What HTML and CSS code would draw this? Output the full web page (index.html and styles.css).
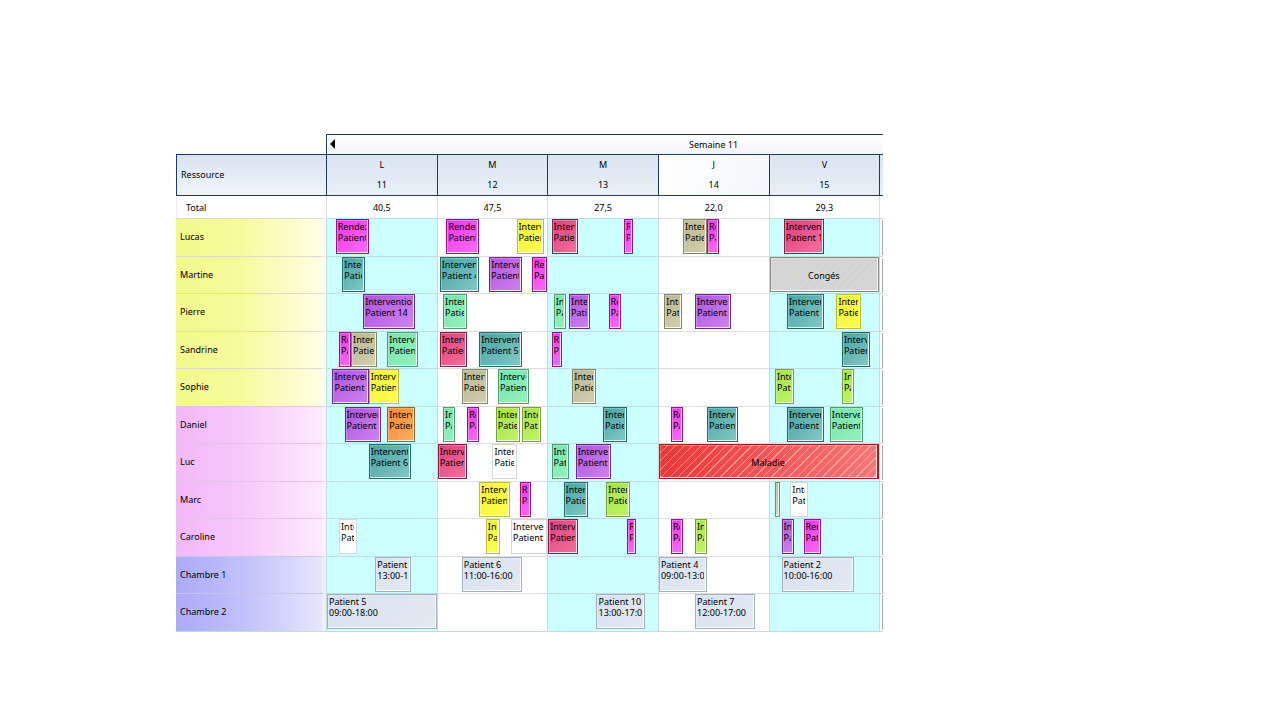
FILE: index.html
```html
<!DOCTYPE html>
<html lang="fr">
<head>
<meta charset="utf-8">
<title>Planning</title>
<link rel="stylesheet" href="styles.css">
</head>
<body>
<main class="page">
<table class="planner">
<colgroup><col class="col-name"><col><col><col><col><col><col class="col-next"></colgroup>
<thead>
<tr class="week"><td class="corner"></td><th colspan="6"><div class="week-bar"><button class="prev" type="button" aria-label="Semaine précédente"><svg width="5" height="10" viewBox="0 0 5 10"><path d="M5 0v10L0 5z"/></svg></button><span>Semaine 11</span></div></th></tr>
<tr class="days"><th class="name">Ressource</th><th>L<br>11</th><th>M<br>12</th><th>M<br>13</th><th class="today">J<br>14</th><th>V<br>15</th><th></th></tr>
<tr class="total"><th>Total</th><td>40,5</td><td>47,5</td><td>27,5</td><td>22,0</td><td>29,3</td><td></td></tr>
</thead>
<tbody>
<tr class="yellow-team"><th>Lucas</th>
<td><div class="ev magenta" style="left:8%;width:30%">Rendez-vous<br>Patient</div></td>
<td><div class="ev magenta" style="left:8%;width:30%">Rendez-vous<br>Patient</div><div class="ev yellow" style="left:72%;width:25%">Intervention<br>Patient</div></td>
<td><div class="ev red" style="left:3%;width:24%">Intervention<br>Patient</div><div class="ev magenta" style="left:69%;width:8%">Rendez-vous<br>Patient</div></td>
<td><div class="ev khaki" style="left:22%;width:22%">Intervention<br>Patient</div><div class="ev magenta" style="left:44%;width:11%">Rendez-vous<br>Patient</div></td>
<td><div class="ev red" style="left:13%;width:37%">Intervention<br>Patient 1</div></td><td><i></i></td></tr>
<tr class="yellow-team"><th>Martine</th>
<td><div class="ev teal" style="left:14%;width:21%">Intervention<br>Patient</div></td>
<td><div class="ev teal" style="left:2%;width:36%">Intervention<br>Patient 4</div><div class="ev violet" style="left:47%;width:30%">Intervention<br>Patient</div><div class="ev magenta" style="left:86%;width:14%">Rendez-vous<br>Patient</div></td>
<td></td><td></td>
<td><div class="ev leave" style="left:0%;width:100%">Congés</div></td><td><i></i></td></tr>
<tr class="yellow-team"><th>Pierre</th>
<td><div class="ev violet" style="left:33%;width:47%">Intervention<br>Patient 14</div></td>
<td><div class="ev green" style="left:5%;width:22%">Intervention<br>Patient</div></td>
<td><div class="ev green" style="left:5%;width:11%">Intervention<br>Patient</div><div class="ev violet" style="left:19%;width:19%">Intervention<br>Patient</div><div class="ev magenta" style="left:55%;width:11%">Rendez-vous<br>Patient</div></td>
<td><div class="ev khaki" style="left:5%;width:16%">Intervention<br>Patient</div><div class="ev violet" style="left:33%;width:33%">Intervention<br>Patient</div></td>
<td><div class="ev teal" style="left:16%;width:34%">Intervention<br>Patient</div><div class="ev yellow" style="left:61%;width:22%">Intervention<br>Patient</div></td><td><i></i></td></tr>
<tr class="yellow-team"><th>Sandrine</th>
<td><div class="ev magenta" style="left:11%;width:11%">Rendez-vous<br>Patient</div><div class="ev khaki" style="left:22%;width:24%">Intervention<br>Patient</div><div class="ev green" style="left:55%;width:28%">Intervention<br>Patient</div></td>
<td><div class="ev red" style="left:2%;width:25%">Intervention<br>Patient</div><div class="ev teal" style="left:38%;width:39%">Intervention<br>Patient 5</div></td>
<td><div class="ev magenta" style="left:3%;width:10%">Rendez-vous<br>Patient</div></td><td></td>
<td><div class="ev teal" style="left:66%;width:26%">Intervention<br>Patient</div></td><td><i></i></td></tr>
<tr class="yellow-team"><th>Sophie</th>
<td><div class="ev violet" style="left:5%;width:33%">Intervention<br>Patient</div><div class="ev yellow" style="left:38%;width:28%">Intervention<br>Patient</div></td>
<td><div class="ev khaki" style="left:22%;width:24%">Intervention<br>Patient</div><div class="ev green" style="left:55%;width:28%">Intervention<br>Patient</div></td>
<td><div class="ev khaki" style="left:22%;width:22%">Intervention<br>Patient</div></td><td></td>
<td><div class="ev lime" style="left:5%;width:17%">Intervention<br>Patient</div><div class="ev lime" style="left:66%;width:11%">Intervention<br>Patient</div></td><td><i></i></td></tr>
<tr class="pink-team"><th>Daniel</th>
<td><div class="ev violet" style="left:16%;width:33%">Intervention<br>Patient</div><div class="ev orange" style="left:55%;width:25%">Intervention<br>Patient</div></td>
<td><div class="ev green" style="left:5%;width:11%">Intervention<br>Patient</div><div class="ev magenta" style="left:27%;width:11%">Rendez-vous<br>Patient</div><div class="ev lime" style="left:53%;width:22%">Intervention<br>Patient</div><div class="ev lime" style="left:77%;width:17%">Intervention<br>Patient</div></td>
<td><div class="ev teal" style="left:50%;width:22%">Intervention<br>Patient</div></td>
<td><div class="ev magenta" style="left:11%;width:11%">Rendez-vous<br>Patient</div><div class="ev teal" style="left:44%;width:28%">Intervention<br>Patient</div></td>
<td><div class="ev teal" style="left:16%;width:34%">Intervention<br>Patient</div><div class="ev green" style="left:55%;width:30%">Intervention<br>Patient</div></td><td><i></i></td></tr>
<tr class="pink-team"><th>Luc</th>
<td><div class="ev teal" style="left:38%;width:39%">Intervention<br>Patient 6</div></td>
<td><div class="ev red" style="left:0%;width:27%">Intervention<br>Patient</div><div class="ev white" style="left:50%;width:22%">Intervention<br>Patient</div></td>
<td><div class="ev green" style="left:3%;width:16%">Intervention<br>Patient</div><div class="ev violet" style="left:25%;width:32%">Intervention<br>Patient</div></td>
<td><div class="ev sick" style="left:0%;width:201%">Maladie</div></td>
<td></td><td><i></i></td></tr>
<tr class="pink-team"><th>Marc</th>
<td></td>
<td><div class="ev yellow" style="left:38%;width:28%">Intervention<br>Patient</div><div class="ev magenta" style="left:75%;width:10%">Rendez-vous<br>Patient</div></td>
<td><div class="ev teal" style="left:14%;width:22%">Intervention<br>Patient</div><div class="ev lime" style="left:53%;width:22%">Intervention<br>Patient</div></td><td></td>
<td><div class="ev khaki" style="left:5%;width:5%"></div><div class="ev white" style="left:19%;width:16%">Intervention<br>Patient</div></td><td><i></i></td></tr>
<tr class="pink-team"><th>Caroline</th>
<td><div class="ev white" style="left:11%;width:16%">Intervention<br>Patient</div></td>
<td><div class="ev yellow" style="left:44%;width:13%">Intervention<br>Patient</div><div class="ev white" style="left:67%;width:33%">Intervention<br>Patient</div></td>
<td><div class="ev red" style="left:0%;width:27%">Intervention<br>Patient</div><div class="ev magenta" style="left:72%;width:8%">Rendez-vous<br>Patient</div></td>
<td><div class="ev magenta" style="left:11%;width:11%">Rendez-vous<br>Patient</div><div class="ev lime" style="left:33%;width:11%">Intervention<br>Patient</div></td>
<td><div class="ev violet" style="left:11%;width:11%">Intervention<br>Patient</div><div class="ev magenta" style="left:31%;width:16%">Rendez-vous<br>Patient</div></td><td><i></i></td></tr>
<tr class="room"><th>Chambre 1</th>
<td><div class="ev stay" style="left:44%;width:33%">Patient 11<br>13:00-17:00</div></td>
<td><div class="ev stay" style="left:22%;width:55%">Patient 6<br>11:00-16:00</div></td>
<td></td>
<td><div class="ev stay" style="left:0%;width:44%">Patient 4<br>09:00-13:00</div></td>
<td><div class="ev stay" style="left:11%;width:66%">Patient 2<br>10:00-16:00</div></td><td><i></i></td></tr>
<tr class="room"><th>Chambre 2</th>
<td><div class="ev stay" style="left:0%;width:100%">Patient 5<br>09:00-18:00</div></td>
<td></td>
<td><div class="ev stay" style="left:44%;width:44%">Patient 10<br>13:00-17:00</div></td>
<td><div class="ev stay" style="left:33%;width:55%">Patient 7<br>12:00-17:00</div></td>
<td></td><td><i></i></td></tr>
</tbody>
</table>
</main>
</body>
</html>
```
FILE: styles.css
```css
* { box-sizing: border-box; }
body { margin: 0; background: #fff; color: #000; font-family: "Noto Sans", Tahoma, sans-serif; font-size: 9px; line-height: 11px; }
.page { padding: 134px 31% 0 13.75%; }
.planner { width: 100%; table-layout: fixed; border-collapse: separate; border-spacing: 0; border-bottom: 1px solid #c4dcdc; }
.col-name { width: 150px; }
.col-next { width: 4px; }
th, td { padding: 0; font-weight: normal; }

.week th { height: 20px; overflow: hidden; border: 1px solid #1d3a68; border-width: 1px 0 0 1px; background: linear-gradient(#fff, #f1f6fb); }
.week-bar { display: grid; place-items: center; width: 139%; position: relative; }
.prev { position: absolute; left: 3px; top: 0; display: flex; padding: 0; border: 0; background: none; }

.days th { height: 41px; border: 1px solid #1d3a68; border-right: 0; background: linear-gradient(#dae5f0, #e8eff7); line-height: 20px; }
.days .name { padding-left: 4px; text-align: left; background: linear-gradient(#d7e3f0, #f0f5fb); }
.days .today { background: linear-gradient(100deg, #fff, #f3f7fb); }

.total th, .total td { height: 22px; text-align: center; }
.total th { padding-left: 9px; text-align: left; border-left: 1px solid #ececf0; }
.total td { border-left: 1px solid #ddd; }

tbody th { padding: 0 0 2px 4px; text-align: left; border-top: 1px solid #dcdccc; border-right: 4px solid #fdfdf4; }
tbody th, tbody td { height: 38px; }
tbody tr:nth-child(even) > * { height: 37px; }
tbody td { position: relative; background: #cff; border-top: 1px solid #c2dede; border-left: 1px solid #c4dcdc; }
tbody td:nth-child(3), tbody td:nth-child(5) { background: #fff; border-top-color: #ddd; }
tbody td:last-child { background: #fff; }
tbody td i { display: block; width: 1px; height: 35px; margin-left: 2px; background: #aaa; }
.yellow-team th { background: linear-gradient(90deg, #f3f98c, #f6fa9e 45%, #ffffe4); }
.pink-team th { background: linear-gradient(90deg, #f2b8f8, #f6c9fa 45%, #fdeafd); border-color: #e4c4e6; border-right-color: #fdf1fd; }
.room th { background: linear-gradient(90deg, #ababf8, #c0c0fa 45%, #e6e6ff); border-color: #c6c6ea; border-right-color: #eeeeff; }

.ev { position: absolute; top: 0; z-index: 1; height: 35px; overflow: clip; overflow-clip-margin: content-box; padding: 1px 2px 0 1px; border: 1px solid; white-space: nowrap; box-shadow: inset -1px -1px rgba(255, 255, 255, .8), inset 1px 1px rgba(255, 255, 255, .25); }
.magenta { background: linear-gradient(135deg, #ee35e6, #fb6cf6); border-color: #93148f; }
.yellow { background: linear-gradient(135deg, #f4f23a, #ffff4e); border-color: #bdbd3c; }
.red { background: linear-gradient(135deg, #e0407c, #f2709c); border-color: #85204b; }
.khaki { background: linear-gradient(135deg, #b8b896, #d3d0ac); border-color: #868568; }
.teal { background: linear-gradient(135deg, #45a5a2, #83c9c6); border-color: #266b6c; }
.violet { background: linear-gradient(135deg, #ae55dc, #cf83f2); border-color: #6d2792; }
.green { background: linear-gradient(135deg, #76e3ab, #93f3bc); border-color: #4e9c72; }
.lime { background: linear-gradient(135deg, #a5e343, #c0f56a); border-color: #78a040; }
.orange { background: linear-gradient(135deg, #f38b30, #ffae5e); border-color: #a76022; }
.white { background: #fff; border-color: #d0d8d8; }
.stay { background: linear-gradient(135deg, #d7e2ef, #e4e9f2); border-color: #a3afbc; }
.leave, .sick { display: flex; align-items: center; justify-content: center; }
.leave { background: repeating-linear-gradient(135deg, #d4d4d4 0 5px, #d9d9d9 5px 6px); border-color: #888; }
.sick { border: 1px solid #a01f1f; border-right-width: 2px; background: repeating-linear-gradient(135deg, transparent 0 5px, rgba(255, 205, 205, .6) 5px 6px), linear-gradient(90deg, #ee3636, #fa7676); }
```
